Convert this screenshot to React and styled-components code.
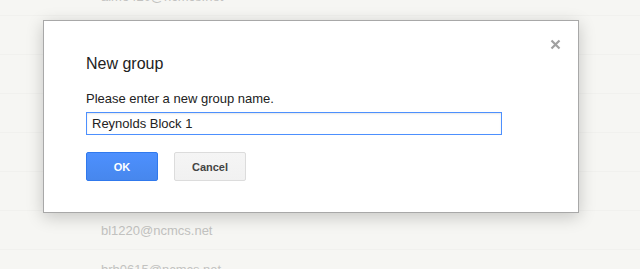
import styled, { createGlobalStyle } from 'styled-components';

const GlobalStyle = createGlobalStyle`
  html, body {
    margin: 0;
    padding: 0;
    background: #f6f6f3;
  }
  body {
    font-family: Arial, "Liberation Sans", Helvetica, sans-serif;
  }
`;

const Page = styled.div`
  position: relative;
  width: 640px;
  height: 269px;
  overflow: hidden;
  background: #f6f6f3;
`;

const ContactList = styled.ul`
  list-style: none;
  margin: 0;
  padding: 0;
  margin-top: -23px;
`;

const ContactRow = styled.li`
  height: 39px;
  display: flex;
  align-items: center;
  padding-left: 101px;
  font-size: 13px;
  color: #c2c2c0;
  border-bottom: 1px solid #f1f1ee;
  box-sizing: border-box;
`;

const Dialog = styled.div`
  position: absolute;
  left: 43px;
  top: 20px;
  width: 536px;
  height: 193px;
  box-sizing: border-box;
  background: #fff;
  border: 1px solid #a8a8a8;
  box-shadow: 0 4px 16px rgba(0, 0, 0, 0.2);
  padding: 32px 42px 0;
`;

const CloseButton = styled.button`
  position: absolute;
  top: 16px;
  right: 16px;
  width: 14px;
  height: 14px;
  padding: 0;
  border: 0;
  background: none;
  display: flex;
  align-items: center;
  justify-content: center;
  cursor: pointer;
`;

const Title = styled.h2`
  margin: 0;
  font-size: 16px;
  font-weight: normal;
  color: #222;
  line-height: 22px;
`;

const Label = styled.div`
  margin-top: 16px;
  font-size: 13px;
  color: #222;
  line-height: 16px;
`;

const NameInput = styled.input`
  display: block;
  margin-top: 5px;
  width: 416px;
  height: 23px;
  box-sizing: border-box;
  border: 1px solid #4d90fe;
  padding: 0 5px;
  font-family: inherit;
  font-size: 13px;
  color: #222;
  outline: none;
  box-shadow: inset 0 1px 2px rgba(0, 0, 0, 0.1);
`;

const Actions = styled.div`
  display: flex;
  gap: 16px;
  margin-top: 17px;
`;

const Button = styled.button`
  width: 72px;
  height: 29px;
  box-sizing: border-box;
  border-radius: 2px;
  font-family: inherit;
  font-size: 11px;
  font-weight: bold;
  cursor: pointer;
  border: 1px solid ${p => (p.$primary ? '#3079ed' : '#dcdcdc')};
  background: ${p =>
    p.$primary
      ? 'linear-gradient(#4d90fe, #4787ed)'
      : 'linear-gradient(#f5f5f5, #f1f1f1)'};
  color: ${p => (p.$primary ? '#fff' : '#444')};
`;

const contacts = [
  'aimo420@ncmcs.net',
  'am1206@ncmcs.net',
  'ab0912@ncmcs.net',
  'ak0331@ncmcs.net',
  'ba0728@ncmcs.net',
  'bd1107@ncmcs.net',
  'bl1220@ncmcs.net',
  'brb0615@ncmcs.net',
];

export default function App() {
  return (
    <Page>
      <GlobalStyle />
      <ContactList>
        {contacts.map(c => (
          <ContactRow key={c}>{c}</ContactRow>
        ))}
      </ContactList>
      <Dialog>
        <CloseButton aria-label="Close">
          <svg width="11" height="11" viewBox="0 0 11 11">
            <path d="M1.5 1.5l8 8M9.5 1.5l-8 8" stroke="#a0a0a0" strokeWidth="2.2" />
          </svg>
        </CloseButton>
        <Title>New group</Title>
        <Label>Please enter a new group name.</Label>
        <NameInput defaultValue="Reynolds Block 1" />
        <Actions>
          <Button $primary>OK</Button>
          <Button>Cancel</Button>
        </Actions>
      </Dialog>
    </Page>
  );
}
